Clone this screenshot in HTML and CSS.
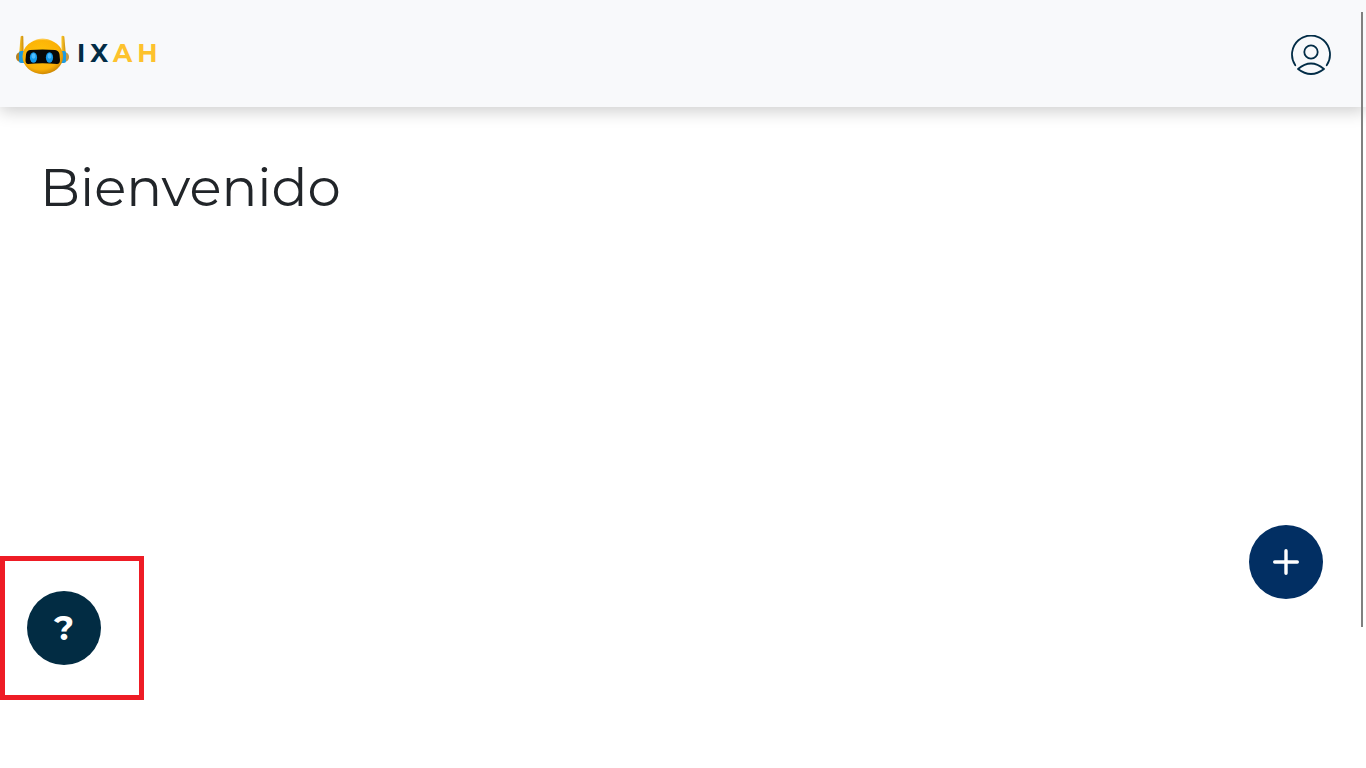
FILE: index.html
```html
<!DOCTYPE html>
<html lang="es">
<head>
  <meta charset="UTF-8">
  <meta name="viewport" content="width=device-width, initial-scale=1">
  <title>IXAH</title>
  <link rel="stylesheet" href="styles.css">
</head>
<body>
  <header class="header">
    <a href="#" class="logo" aria-label="IXAH">
      <svg class="logo-robot" viewBox="0 0 53 40" aria-hidden="true">
        <defs>
          <radialGradient id="head" cx="45%" cy="40%" r="62%">
            <stop offset="0" stop-color="#ffc20a"/>
            <stop offset="0.75" stop-color="#fbb006"/>
            <stop offset="1" stop-color="#c98505"/>
          </radialGradient>
          <linearGradient id="antenna">
            <stop offset="0" stop-color="#ffcb2b"/>
            <stop offset="1" stop-color="#c98a0c"/>
          </linearGradient>
        </defs>
        <path d="M4.600 1.500Q6.400 0 7.300 1.500L7.600 19H3.100Z" fill="url(#antenna)"/>
        <path d="M45.400 1.500Q46.600 0 48.300 1.500L49.800 19H45.600Z" fill="url(#antenna)"/>
        <path d="M4 17Q0 18 0 22T4 27Z" fill="#b78320"/>
        <path d="M49 17Q53 18 53 22T49 27Z" fill="#c99a43"/>
        <rect x="3" y="16" width="7" height="12" rx="2" fill="#1e9be0"/>
        <rect x="43" y="16" width="7" height="12" rx="2" fill="#1e9be0"/>
        <ellipse cx="26.800" cy="21.500" rx="20.300" ry="17.700" fill="url(#head)"/>
        <path d="M16 6Q26 1 37 6Q27 4 16 6Z" fill="#ffe08a" opacity="0.5"/>
        <path d="M14 15Q26.500 14 39 15Q43 15.500 43.500 19.500L44 25Q44 29 41 29Q26.500 27.500 12 29Q9.500 29 9.500 25L10 19.500Q10.500 15.500 14 15Z" fill="#080808"/>
        <ellipse cx="17.500" cy="22.500" rx="3.600" ry="5.200" fill="#1499ea"/>
        <ellipse cx="33.500" cy="22.500" rx="3.600" ry="5.200" fill="#1499ea"/>
        <ellipse cx="17.500" cy="21" rx="2" ry="2.700" fill="#4dbcff"/>
        <ellipse cx="33.500" cy="21" rx="2" ry="2.700" fill="#4dbcff"/>
      </svg>
      <span class="logo-name">
        <span>I</span>
        <span>X</span>
        <span class="logo-accent">A</span>
        <span class="logo-accent">H</span>
      </span>
    </a>
    <button type="button" class="profile-button" aria-label="Perfil">
      <svg viewBox="0 0 40 40" fill="none" stroke="#022c46" stroke-width="1.800" stroke-linecap="round" aria-hidden="true">
        <path d="M4.300 30.200A19 19 0 1 1 35.700 30.200"/>
        <circle cx="20" cy="17" r="6.700"/>
        <path d="M7 34Q20 23 33 34Q20 44 7 34Z" stroke-linejoin="round"/>
      </svg>
    </button>
  </header>

  <main class="content">
    <h1 class="title">Bienvenido</h1>
  </main>

  <div class="scroll-thumb"></div>

  <button type="button" class="round-button add-button" aria-label="Agregar">
    <svg viewBox="0 0 26 26" fill="none" stroke="#fff" stroke-width="3.400" stroke-linecap="round" aria-hidden="true">
      <path d="M13 1.700V24.300M1.700 13H24.300"/>
    </svg>
  </button>

  <div class="help-box">
    <button type="button" class="round-button help-button">?</button>
  </div>
</body>
</html>
```
FILE: styles.css
```css
body {
  margin: 0;
  background-color: #fff;
  color: #212529;
  font-family: Montserrat, Inter, sans-serif;
}

.header {
  display: flex;
  justify-content: space-between;
  align-items: center;
  box-sizing: border-box;
  min-height: 107px;
  padding: 2px 32px 0 16px;
  background-color: #f8f9fb;
  box-shadow: 0 4px 16px rgba(0, 0, 0, 0.2);
}

.logo {
  display: flex;
  align-items: center;
  gap: 8px;
  text-decoration: none;
}

.logo-robot {
  width: 53px;
  height: 40px;
}

.logo-name {
  display: flex;
  gap: 5px;
  padding-bottom: 4px;
  font-size: 25px;
  line-height: 30px;
  font-weight: bold;
  color: #022c46;
}

.logo-accent {
  color: #fdc22d;
}

.profile-button {
  width: 46px;
  height: 46px;
  padding: 3px;
  border: none;
  background: none;
  cursor: pointer;
}

.profile-button svg {
  display: block;
}

.content {
  padding: 48px 40px;
}

.title {
  margin: 0;
  font-size: 53px;
  line-height: 64px;
  font-weight: 400;
}

.round-button {
  display: flex;
  justify-content: center;
  align-items: center;
  width: 74px;
  height: 74px;
  padding: 0;
  border: none;
  border-radius: 50%;
  color: #fff;
  cursor: pointer;
}

.add-button {
  position: fixed;
  right: 43px;
  bottom: 169px;
  background-color: #022f63;
}

.add-button svg {
  width: 26px;
  height: 26px;
}

.help-box {
  position: fixed;
  left: 0;
  bottom: 68px;
  padding: 30px 38px 30px 22px;
  border: 5px solid #ee1c25;
}

.help-button {
  background-color: #022c43;
  font-family: inherit;
  font-size: 34px;
  font-weight: bold;
}

.scroll-thumb {
  position: fixed;
  top: 12px;
  right: 3px;
  bottom: 141px;
  width: 2px;
  background-color: #808080;
}
```
